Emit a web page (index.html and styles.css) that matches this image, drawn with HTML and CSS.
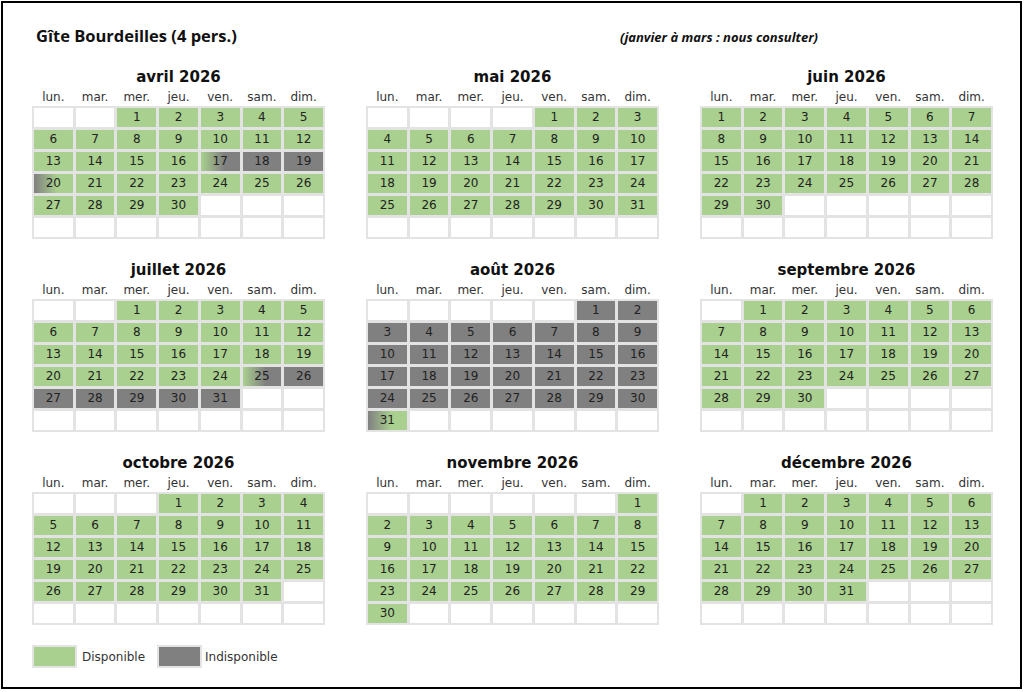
FILE: index.html
```
<!DOCTYPE html>
<html lang="fr">
<head>
<meta charset="utf-8">
<title>Gîte Bourdeilles</title>
<link rel="stylesheet" href="styles.css">
</head>
<body>
<div class="frame">
  <div class="head">
    <div class="title">Gîte Bourdeilles (4 pers.)</div>
    <div class="note">(janvier à mars : nous consulter)</div>
  </div>
  <div class="months">
    <div class="month">
      <h2>avril 2026</h2>
      <div class="days"><span>lun.</span><span>mar.</span><span>mer.</span><span>jeu.</span><span>ven.</span><span>sam.</span><span>dim.</span></div>
      <div class="grid">
        <span></span><span></span><span>1</span><span>2</span><span>3</span><span>4</span><span>5</span>
        <span>6</span><span>7</span><span>8</span><span>9</span><span>10</span><span>11</span><span>12</span>
        <span>13</span><span>14</span><span>15</span><span>16</span><span class="gx">17</span><span class="x">18</span><span class="x">19</span>
        <span class="xg">20</span><span>21</span><span>22</span><span>23</span><span>24</span><span>25</span><span>26</span>
        <span>27</span><span>28</span><span>29</span><span>30</span><span></span><span></span><span></span>
        <span></span><span></span><span></span><span></span><span></span><span></span><span></span>
      </div>
    </div>
    <div class="month">
      <h2>mai 2026</h2>
      <div class="days"><span>lun.</span><span>mar.</span><span>mer.</span><span>jeu.</span><span>ven.</span><span>sam.</span><span>dim.</span></div>
      <div class="grid">
        <span></span><span></span><span></span><span></span><span>1</span><span>2</span><span>3</span>
        <span>4</span><span>5</span><span>6</span><span>7</span><span>8</span><span>9</span><span>10</span>
        <span>11</span><span>12</span><span>13</span><span>14</span><span>15</span><span>16</span><span>17</span>
        <span>18</span><span>19</span><span>20</span><span>21</span><span>22</span><span>23</span><span>24</span>
        <span>25</span><span>26</span><span>27</span><span>28</span><span>29</span><span>30</span><span>31</span>
        <span></span><span></span><span></span><span></span><span></span><span></span><span></span>
      </div>
    </div>
    <div class="month">
      <h2>juin 2026</h2>
      <div class="days"><span>lun.</span><span>mar.</span><span>mer.</span><span>jeu.</span><span>ven.</span><span>sam.</span><span>dim.</span></div>
      <div class="grid">
        <span>1</span><span>2</span><span>3</span><span>4</span><span>5</span><span>6</span><span>7</span>
        <span>8</span><span>9</span><span>10</span><span>11</span><span>12</span><span>13</span><span>14</span>
        <span>15</span><span>16</span><span>17</span><span>18</span><span>19</span><span>20</span><span>21</span>
        <span>22</span><span>23</span><span>24</span><span>25</span><span>26</span><span>27</span><span>28</span>
        <span>29</span><span>30</span><span></span><span></span><span></span><span></span><span></span>
        <span></span><span></span><span></span><span></span><span></span><span></span><span></span>
      </div>
    </div>
    <div class="month">
      <h2>juillet 2026</h2>
      <div class="days"><span>lun.</span><span>mar.</span><span>mer.</span><span>jeu.</span><span>ven.</span><span>sam.</span><span>dim.</span></div>
      <div class="grid">
        <span></span><span></span><span>1</span><span>2</span><span>3</span><span>4</span><span>5</span>
        <span>6</span><span>7</span><span>8</span><span>9</span><span>10</span><span>11</span><span>12</span>
        <span>13</span><span>14</span><span>15</span><span>16</span><span>17</span><span>18</span><span>19</span>
        <span>20</span><span>21</span><span>22</span><span>23</span><span>24</span><span class="gx">25</span><span class="x">26</span>
        <span class="x">27</span><span class="x">28</span><span class="x">29</span><span class="x">30</span><span class="x">31</span><span></span><span></span>
        <span></span><span></span><span></span><span></span><span></span><span></span><span></span>
      </div>
    </div>
    <div class="month">
      <h2>août 2026</h2>
      <div class="days"><span>lun.</span><span>mar.</span><span>mer.</span><span>jeu.</span><span>ven.</span><span>sam.</span><span>dim.</span></div>
      <div class="grid off">
        <span></span><span></span><span></span><span></span><span></span><span>1</span><span>2</span>
        <span>3</span><span>4</span><span>5</span><span>6</span><span>7</span><span>8</span><span>9</span>
        <span>10</span><span>11</span><span>12</span><span>13</span><span>14</span><span>15</span><span>16</span>
        <span>17</span><span>18</span><span>19</span><span>20</span><span>21</span><span>22</span><span>23</span>
        <span>24</span><span>25</span><span>26</span><span>27</span><span>28</span><span>29</span><span>30</span>
        <span class="xg">31</span><span></span><span></span><span></span><span></span><span></span><span></span>
      </div>
    </div>
    <div class="month">
      <h2>septembre 2026</h2>
      <div class="days"><span>lun.</span><span>mar.</span><span>mer.</span><span>jeu.</span><span>ven.</span><span>sam.</span><span>dim.</span></div>
      <div class="grid">
        <span></span><span>1</span><span>2</span><span>3</span><span>4</span><span>5</span><span>6</span>
        <span>7</span><span>8</span><span>9</span><span>10</span><span>11</span><span>12</span><span>13</span>
        <span>14</span><span>15</span><span>16</span><span>17</span><span>18</span><span>19</span><span>20</span>
        <span>21</span><span>22</span><span>23</span><span>24</span><span>25</span><span>26</span><span>27</span>
        <span>28</span><span>29</span><span>30</span><span></span><span></span><span></span><span></span>
        <span></span><span></span><span></span><span></span><span></span><span></span><span></span>
      </div>
    </div>
    <div class="month">
      <h2>octobre 2026</h2>
      <div class="days"><span>lun.</span><span>mar.</span><span>mer.</span><span>jeu.</span><span>ven.</span><span>sam.</span><span>dim.</span></div>
      <div class="grid">
        <span></span><span></span><span></span><span>1</span><span>2</span><span>3</span><span>4</span>
        <span>5</span><span>6</span><span>7</span><span>8</span><span>9</span><span>10</span><span>11</span>
        <span>12</span><span>13</span><span>14</span><span>15</span><span>16</span><span>17</span><span>18</span>
        <span>19</span><span>20</span><span>21</span><span>22</span><span>23</span><span>24</span><span>25</span>
        <span>26</span><span>27</span><span>28</span><span>29</span><span>30</span><span>31</span><span></span>
        <span></span><span></span><span></span><span></span><span></span><span></span><span></span>
      </div>
    </div>
    <div class="month">
      <h2>novembre 2026</h2>
      <div class="days"><span>lun.</span><span>mar.</span><span>mer.</span><span>jeu.</span><span>ven.</span><span>sam.</span><span>dim.</span></div>
      <div class="grid">
        <span></span><span></span><span></span><span></span><span></span><span></span><span>1</span>
        <span>2</span><span>3</span><span>4</span><span>5</span><span>6</span><span>7</span><span>8</span>
        <span>9</span><span>10</span><span>11</span><span>12</span><span>13</span><span>14</span><span>15</span>
        <span>16</span><span>17</span><span>18</span><span>19</span><span>20</span><span>21</span><span>22</span>
        <span>23</span><span>24</span><span>25</span><span>26</span><span>27</span><span>28</span><span>29</span>
        <span>30</span><span></span><span></span><span></span><span></span><span></span><span></span>
      </div>
    </div>
    <div class="month">
      <h2>décembre 2026</h2>
      <div class="days"><span>lun.</span><span>mar.</span><span>mer.</span><span>jeu.</span><span>ven.</span><span>sam.</span><span>dim.</span></div>
      <div class="grid">
        <span></span><span>1</span><span>2</span><span>3</span><span>4</span><span>5</span><span>6</span>
        <span>7</span><span>8</span><span>9</span><span>10</span><span>11</span><span>12</span><span>13</span>
        <span>14</span><span>15</span><span>16</span><span>17</span><span>18</span><span>19</span><span>20</span>
        <span>21</span><span>22</span><span>23</span><span>24</span><span>25</span><span>26</span><span>27</span>
        <span>28</span><span>29</span><span>30</span><span>31</span><span></span><span></span><span></span>
        <span></span><span></span><span></span><span></span><span></span><span></span><span></span>
      </div>
    </div>
  </div>
  <div class="legend">
    <span class="sw sw-on"></span>
    <span class="lbl">Disponible</span>
    <span class="sw sw-off"></span>
    <span class="lbl lbl-off">Indisponible</span>
  </div>
</div>
</body>
</html>
```
FILE: styles.css
```
* { box-sizing: border-box; }

body {
  margin: 0;
  background: #fff;
}

.frame {
  margin: 1px;
  width: 1021px;
  height: 688px;
  border: 2px solid #000;
  padding: 23px 0 0 29px;
  font-family: "DejaVu Sans", Verdana, sans-serif;
  color: #222;
}

.head {
  display: flex;
  align-items: center;
  height: 20px;
}

.title {
  width: 588px;
  padding-left: 4px;
  font-family: "Open Sans", Lato, sans-serif;
  font-weight: bold;
  font-size: 16.5px;
  line-height: 20px;
  color: #111;
}

.note {
  padding-top: 2px;
  font-family: "Open Sans", Lato, sans-serif;
  font-style: italic;
  font-weight: bold;
  font-size: 13px;
  line-height: 20px;
  color: #111;
}

.months {
  display: grid;
  grid-template-columns: repeat(3, 293px);
  column-gap: 41px;
  row-gap: 20px;
  margin-top: 20px;
}

.month h2 {
  margin: 0;
  height: 20px;
  padding-top: 1px;
  text-align: center;
  font-family: "DejaVu Sans", Verdana, sans-serif;
  font-weight: bold;
  font-size: 15px;
  line-height: 20px;
  color: #111;
}

.days {
  display: grid;
  grid-template-columns: repeat(7, 1fr);
  column-gap: 3px;
  padding: 3px 2px 0;
  height: 20px;
  font-size: 12px;
  line-height: 17px;
  text-align: center;
  color: #333;
}

.grid {
  display: grid;
  grid-template-columns: repeat(7, 1fr);
  grid-auto-rows: 19px;
  gap: 3px;
  padding: 2px;
  background: #e3e3e3;
}

.grid span {
  background: #a9d08e;
  font-size: 12px;
  line-height: 19px;
  text-align: center;
  color: #222;
}

.grid.off span {
  background: #808080;
}

.grid span:empty {
  background: #fff;
}

.grid .x {
  background: #808080;
}

.grid .gx {
  background: linear-gradient(to right, #a9d08e, #808080 60%);
}

.grid .xg,
.grid.off .xg {
  background: linear-gradient(to right, #808080, #a9d08e 60%);
}

.legend {
  display: flex;
  align-items: center;
  margin-top: 20px;
  height: 23px;
}

.sw {
  width: 45px;
  height: 23px;
  border: 2px solid #e3e3e3;
}

.sw-on { background: #a9d08e; }
.sw-off { background: #808080; }

.lbl {
  width: 80px;
  padding-left: 5px;
  font-size: 12px;
  color: #333;
}

.lbl-off {
  padding-left: 3px;
}
```
